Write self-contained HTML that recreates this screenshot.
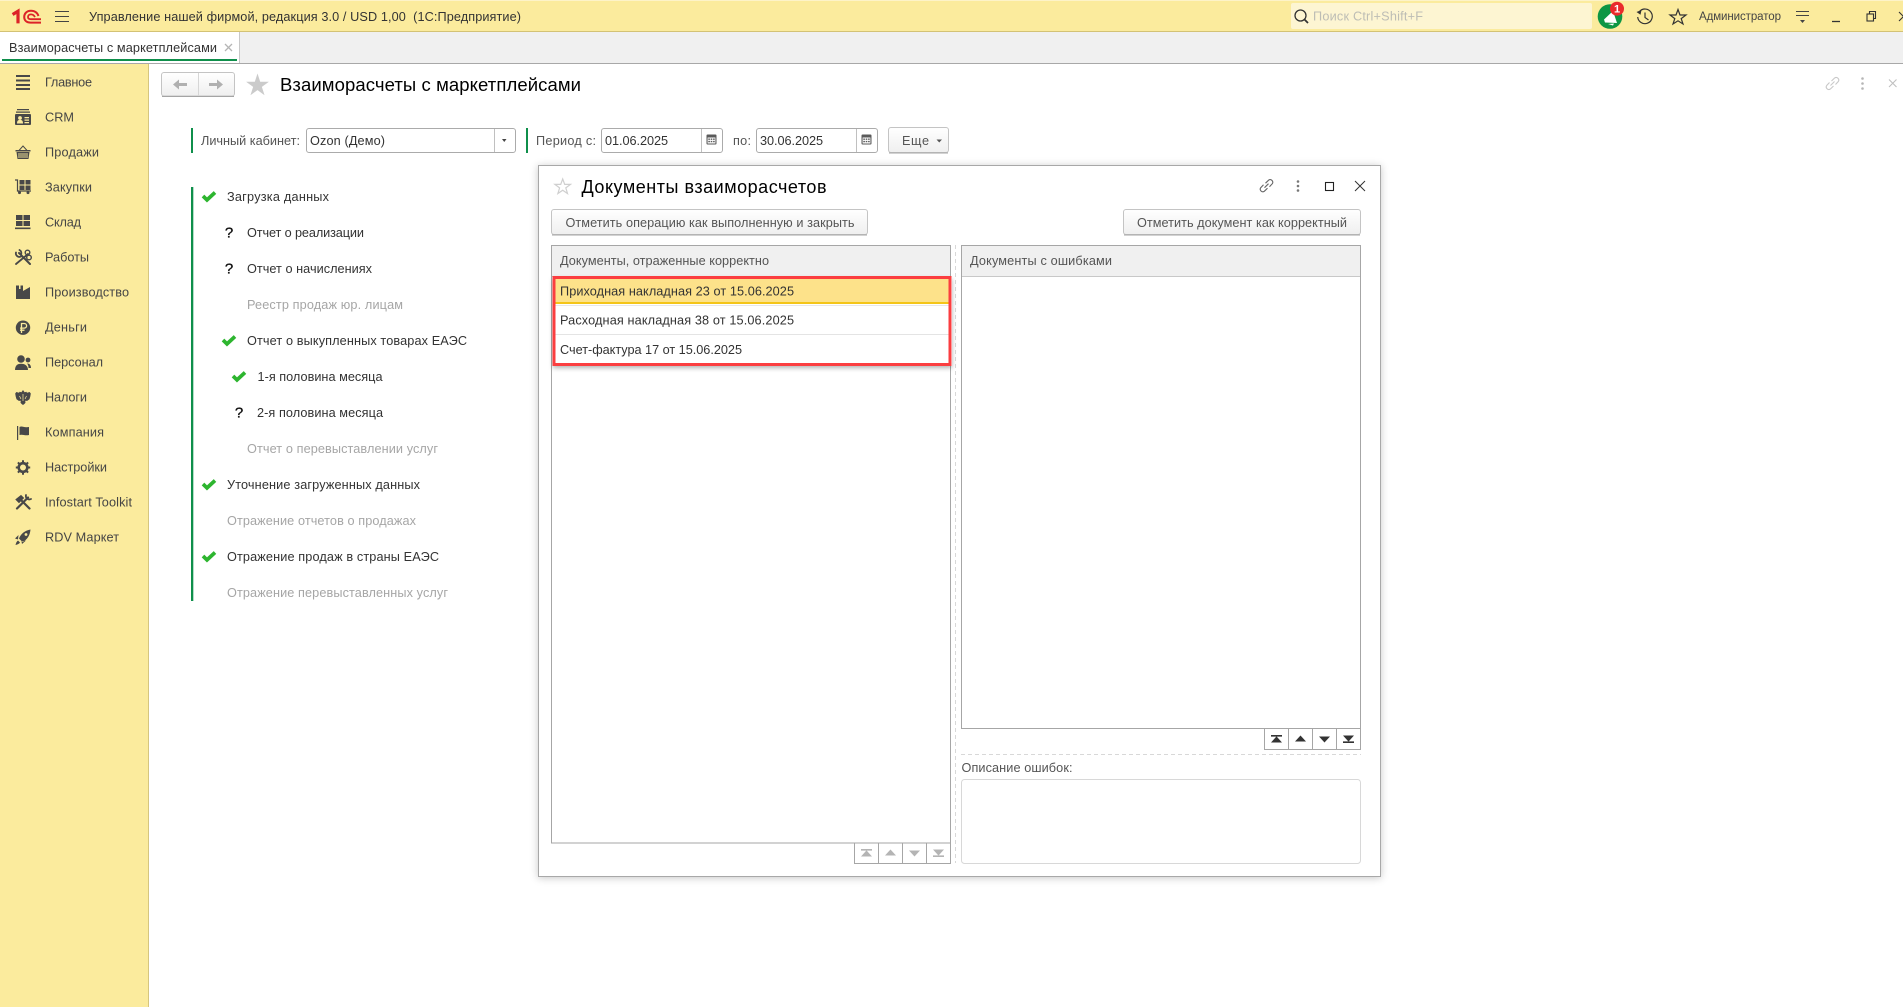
<!DOCTYPE html>
<html lang="ru"><head><meta charset="utf-8"><title>Взаиморасчеты с маркетплейсами</title>
<style>
html,body{margin:0;padding:0;background:#fff;width:1903px;height:1007px;overflow:hidden}
svg{display:block}
text{font-family:"Liberation Sans",Arial,sans-serif;font-size:12.7px;white-space:pre}
.n{fill:#454545}.d{fill:#333}.g{fill:#a6a6a6}.h{fill:#555}
</style></head><body>
<svg xmlns="http://www.w3.org/2000/svg" width="1903" height="1007" viewBox="0 0 1903 1007">
<defs>
<linearGradient id="btn" x1="0" y1="0" x2="0" y2="1"><stop offset="0" stop-color="#fff"/><stop offset="1" stop-color="#efefef"/></linearGradient>
<filter id="sh" x="-5%" y="-5%" width="110%" height="110%"><feDropShadow dx="0" dy="1" stdDeviation="4" flood-color="#000" flood-opacity=".22"/></filter>
<filter id="sh2" x="-5%" y="-10%" width="110%" height="120%"><feDropShadow dx="0" dy="2" stdDeviation="2.5" flood-color="#000" flood-opacity=".3"/></filter>
<polygon id="st" points="0,-1 .225,-.309 .951,-.309 .363,.118 .588,.809 0,.382 -.588,.809 -.363,.118 -.951,-.309 -.225,-.309"/>
<path id="ck" d="M-6 -.5 L-2 3.4 L6 -4" fill="none" stroke="#2db52f" stroke-width="3.7"/>
<g id="cal"><rect x="-5" y="-5" width="10" height="10" rx="1" fill="#5a5a5a"/><rect x="-3.9" y="-2" width="7.8" height="6" fill="#fff"/><path d="M-3.2 -1 h1.6v1.4h-1.6zM-.8 -1 h1.6v1.4h-1.6zM1.6 -1 h1.6v1.4h-1.6zM-3.2 1.4 h1.6v1.4h-1.6zM-.8 1.4 h1.6v1.4h-1.6zM1.6 1.4 h1.6v1.4h-1.6z" fill="#5a5a5a"/></g>
<path id="tb1" d="M-5.5 -4h11v1.6h-11zM0 -2.6 L5.5 3.5 H-5.5z"/>
<path id="tb2" d="M0 -3.5 L5.5 2.5 H-5.5z"/>
<path id="tb3" d="M0 3.5 L5.5 -2.5 H-5.5z"/>
<path id="tb4" d="M-5.5 2.4h11v1.6h-11zM0 2.6 L5.5 -3.5 H-5.5z"/>
<g id="lnk" fill="none" stroke-width="1.1"><path d="M-1 -2.5 L2.2 -5.6 a2.6 2.6 0 0 1 3.6 3.6 L3 1"/><path d="M1 2.5 L-2.2 5.6 a2.6 2.6 0 0 1 -3.6 -3.6 L-3 -1"/><path d="M-2 2 L2 -2"/></g>
</defs>

<!-- top bar -->
<rect width="1903" height="31" fill="#fbeb9d"/>
<rect width="1903" height="1" fill="#fdf3c8"/>
<rect y="31" width="1903" height="1" fill="#d3c275"/>
<!-- logo -->
<g fill="none" stroke="#dc2328">
<path d="M12.6 14.5 L18 11.2 V23.4" stroke-width="3.2"/>
<path d="M38.5 16 C37 12 34 10.8 31 10.8 C26.6 10.8 24.2 13.6 24.2 17 C24.2 20.8 27 22.6 30.6 22.6 H41" stroke-width="2"/>
<path d="M35 17 C33.8 15 32.6 14.4 31 14.4 C29 14.4 28 15.6 28 17 C28 18.6 29.4 19.2 31 19.2 H41" stroke-width="1.8"/>
</g>
<!-- hamburger -->
<path d="M55 11.5h14M55 16.5h14M55 21.5h14" stroke="#444" stroke-width="1.1"/>
<text x="89" y="21" class="d" textLength="432" fill="#444">Управление нашей фирмой, редакция 3.0 / USD 1,00  (1С:Предприятие)</text>
<!-- search -->
<rect x="1291" y="3" width="301" height="26" rx="2" fill="#fdf5d2"/>
<circle cx="1300.5" cy="15.5" r="5.5" fill="none" stroke="#333" stroke-width="1.3"/>
<path d="M1304.5 19.5 L1308 23" stroke="#333" stroke-width="1.8"/>
<text x="1313" y="20.5" fill="#bdbdb5" textLength="110">Поиск Ctrl+Shift+F</text>
<!-- bell -->
<circle cx="1610" cy="16.5" r="12.3" fill="#0d9644"/>
<path d="M1604 19.5 L1613 11 L1617 23 L1605 22.5 Z M1608 24 L1613 25.5 L1614 23.5 Z" fill="#fff"/>
<circle cx="1617" cy="8.7" r="7" fill="#ea2b2b"/>
<text x="1617" y="12.7" fill="#fff" text-anchor="middle" font-weight="bold" style="font-size:11px">1</text>
<!-- history -->
<g fill="none" stroke="#333" stroke-width="1.2"><path d="M1639.5 11.5 A7.3 7.3 0 1 1 1637.7 17"/><path d="M1645 12.500 V17.500 L1648.500 20"/></g>
<path d="M1636.5 12 L1641.5 10 L1640.5 14.800Z" fill="#333"/>
<polygon points="1678,9.500 1680,15 1686,15 1681.200,18.600 1683,24 1678,20.800 1673,24 1674.800,18.600 1670,15 1676,15" fill="none" stroke="#333" stroke-width="1.200"/>
<text x="1699" y="20" fill="#444" textLength="82" style="font-size:11.500px">Администратор</text>
<path d="M1796 11.500h13M1796 15.500h13" stroke="#444" stroke-width="1.100"/><path d="M1800 20h5l-2.500 3z" fill="#444"/>
<path d="M1832 21.500h8" stroke="#333" stroke-width="1.300"/>
<rect x="1867" y="14" width="6.500" height="7" fill="none" stroke="#333" stroke-width="1.100"/><path d="M1869.500 13.500V11.500h6v7h-2" fill="none" stroke="#333" stroke-width="1.100"/>
<path d="M1899 12 L1908 21M1908 12L1899 21" stroke="#333" stroke-width="1.100"/>

<!-- tab bar -->
<rect y="32" width="1903" height="31" fill="#f0f0f0"/>
<rect y="63" width="1903" height="1" fill="#a8a8a8"/>
<rect y="32" width="239" height="31" fill="#fff"/>
<rect x="239" y="32" width="1" height="31" fill="#c8c8c8"/>
<rect x="2" y="59" width="235" height="2" fill="#0f8f4b"/>
<text x="9" y="52" class="d" textLength="208">Взаиморасчеты с маркетплейсами</text>
<path d="M225 44 L232 51M232 44 L225 51" stroke="#b5b5b5" stroke-width="1.300"/>

<!-- sidebar -->
<rect y="64" width="148" height="943" fill="#fbeb9d"/>
<rect x="148" y="64" width="1" height="943" fill="#d6c67e"/>
<g class="n">
<text x="45" y="86.500" textLength="47">Главное</text>
<text x="45" y="121.500" textLength="29">CRM</text>
<text x="45" y="156.500" textLength="54">Продажи</text>
<text x="45" y="191.500" textLength="47">Закупки</text>
<text x="45" y="226.500" textLength="36">Склад</text>
<text x="45" y="261.500" textLength="44">Работы</text>
<text x="45" y="296.500" textLength="84">Производство</text>
<text x="45" y="331.500" textLength="42">Деньги</text>
<text x="45" y="366.500" textLength="58">Персонал</text>
<text x="45" y="401.500" textLength="42">Налоги</text>
<text x="45" y="436.500" textLength="59">Компания</text>
<text x="45" y="471.500" textLength="62">Настройки</text>
<text x="45" y="506.500" textLength="87">Infostart Toolkit</text>
<text x="45" y="541.500" textLength="74">RDV Маркет</text>
</g>
<g fill="#484848" stroke="none">
<!-- главное -->
<path d="M16 75h14v2h-14zM16 79.500h14v2h-14zM16 84h14v2h-14zM16 88h14v2h-14z"/>
<!-- crm -->
<path d="M17 109h12v1.200h-12zM16 111.500h14v1.200h-14z"/>
<rect x="15" y="114" width="16" height="11" rx="1"/>
<circle cx="20" cy="118" r="1.900" fill="#fbeb9d"/><path d="M17 123.500c0-3 1.400-3.600 3-3.600s3 .6 3 3.600z" fill="#fbeb9d"/><path d="M24.500 117h4.500v1.200h-4.500zM24.500 119.500h4.500v1.200h-4.500zM24.500 122h4.500v1.200h-4.500z" fill="#fbeb9d"/>
<!-- basket -->
<path d="M15.500 150h15v1.500h-15zM16.500 152h13l-1 7h-11z"/>
<path d="M18.500 151 L23 146 L27.500 151" fill="none" stroke="#484848" stroke-width="1"/>
<path d="M19 153v5M21 153v5M23 153v5M25 153v5M27 153v5" stroke="#fbeb9d" stroke-width=".9"/>
<!-- cart -->
<path d="M19.500 180h5v4.500h-5zM25.500 180h5v4.500h-5zM19.500 185.500h5v4.500h-5zM25.500 185.500h5v4.500h-5z"/>
<path d="M15 180h2.500v11H31" fill="none" stroke="#484848" stroke-width="1.200"/>
<circle cx="19.500" cy="192.600" r="1.500"/><circle cx="28" cy="192.600" r="1.500"/>
<!-- sklad -->
<path d="M16 215h6.500v5h-6.500zM23.500 215h6.500v5h-6.500zM16 221h6.500v5h-6.500zM23.500 221h6.500v5h-6.500zM15 227.500h15.500v1.600h-15.500z"/>
<!-- raboty -->
<g fill="none" stroke="#484848" stroke-linecap="round"><path d="M19 253 L30 264" stroke-width="2"/><path d="M16 252.500 a3.500 3.500 0 0 0 5 4 M19.500 250 a3.500 3.500 0 0 1 1.500 4.500" stroke-width="1.800"/><path d="M28 254 L16 264" stroke-width="1.800"/><circle cx="27.500" cy="252.500" r="2.300" stroke-width="1.400"/><circle cx="29" cy="257.500" r="2.300" stroke-width="1.400"/></g>
<!-- factory -->
<path d="M16 299 V285.500 H19 V289 H20.500 V285.500 H23 V291 L30 287 V299Z"/>
<!-- money -->
<circle cx="23" cy="327.700" r="7.200"/>
<path d="M21.500 333 V323.500 H24.300 a2.200 2.200 0 0 1 0 4.600 H20 M20 330.200 H24.500" fill="none" stroke="#fbeb9d" stroke-width="1.300"/>
<!-- person -->
<circle cx="21" cy="359" r="3.800"/><path d="M15 370 c0-5 3-6.300 6-6.300 s7 1.300 7 6.300z"/><circle cx="28" cy="360" r="2.400"/><path d="M27 363.500c3 0 4 2 4 4.500h-2.500c0-2-.5-3.500-1.500-4.500z"/>
<!-- eagle -->
<path d="M23 390 l1.600 2.200 1.800-.4 .6 1 2.600-.8 1.200 1.500 -.5 3 -.8 2.800 -2.300 1.600 -2 -.2 .3 2 -1 1.200 -1.500 1.100 -1.500 -1.100 -1 -1.200 .3 -2 -2 .2 -2.300 -1.600 -.8 -2.800 -.5 -3 1.200 -1.500 2.600 .8 .6 -1 1.800 .4z"/>
<path d="M23 394v7M19.500 396l1.500 3M26.500 396l-1.500 3" stroke="#fbeb9d" stroke-width=".7"/>
<!-- flag -->
<path d="M17 426h1.200v14h-1.200zM19.500 427c2.500-1.500 4.500 1 9.500 0v8c-4 1-6.500-1-9.500 0z"/>
<!-- gear -->
<circle cx="23" cy="467.500" r="4.300" fill="none" stroke="#484848" stroke-width="2.600"/>
<path d="M23 460.300v3M23 471.700v3M15.800 467.500h3M27.200 467.500h3M17.900 462.400l2.100 2.100M26 470.500l2.100 2.100M28.100 462.400l-2.100 2.100M20 470.500l-2.100 2.100" stroke="#484848" stroke-width="2"/>
<!-- infostart -->
<g fill="none" stroke="#484848" stroke-linecap="round"><path d="M17 508.500 L28 497.500" stroke-width="2.200"/><path d="M20 499 L29.500 508.500" stroke-width="2.200"/><path d="M16 499.500 L21 495.500 L23.500 498 L19 502.500Z" fill="#484848" stroke-width="1"/><path d="M31 499a3.500 3.500 0 0 1-5-4" stroke-width="1.800"/></g>
<!-- rocket -->
<path d="M30.500 529.500 C25 530.500 21 533.500 19 538.500 L22.500 542 C27 540 30 535.500 30.500 529.500Z M18.500 535 L15 538.500 L18 539.500Z M26 540.500 L22 544 L21.500 541.500Z M18 540.500 C16.500 541.500 16 543 15.500 545 C17.500 544.500 19 544 20 542.500Z"/>
<circle cx="26" cy="534.500" r="1.400" fill="#fbeb9d"/>
</g>

<!-- header -->
<rect x="161.500" y="72.500" width="73" height="23.500" rx="2.500" fill="url(#btn)" stroke="#c4c4c4"/>
<path d="M162 96.500h72" stroke="#a4a4a4"/>
<path d="M198.500 73v23" stroke="#d6d6d6"/>
<path d="M173 84.500 L179 79.500V83H187v3H179v3.500Z" fill="#b0b0b0"/>
<path d="M223 84.500 L217 79.500V83H209v3H217v3.500Z" fill="#b0b0b0"/>
<use href="#st" transform="translate(257.500 85.500) scale(12)" fill="#cbcbcb"/>
<text x="280" y="91" fill="#000" textLength="301" style="font-size:18.500px">Взаиморасчеты с маркетплейсами</text>
<use href="#lnk" transform="translate(1832.500 83.500)" stroke="#c8c8c8"/>
<circle cx="1862.500" cy="78.500" r="1.300" fill="#b5b5b5"/><circle cx="1862.500" cy="83.500" r="1.300" fill="#b5b5b5"/><circle cx="1862.500" cy="88.500" r="1.300" fill="#b5b5b5"/>
<path d="M1889 79.500 L1896.500 87M1896.500 79.500 L1889 87" stroke="#c0c0c0" stroke-width="1.100"/>

<!-- filter row -->
<rect x="191" y="128" width="2" height="25" fill="#0f8f4b"/>
<text x="201" y="145" class="h" textLength="99">Личный кабинет:</text>
<rect x="306.500" y="128.500" width="209" height="24" rx="2.500" fill="#fff" stroke="#ababab"/>
<path d="M494.500 129v23" stroke="#c0c0c0"/>
<path d="M502 139h4.500l-2.250 3z" fill="#444"/>
<text x="310" y="145" class="d" textLength="75">Ozon (Демо)</text>
<rect x="526" y="128" width="2" height="25" fill="#0f8f4b"/>
<text x="536" y="145" class="h" textLength="60">Период с:</text>
<rect x="601.500" y="128.500" width="121" height="24" rx="2.500" fill="#fff" stroke="#ababab"/>
<path d="M701.500 129v23" stroke="#c0c0c0"/>
<text x="605" y="145" class="d" textLength="63">01.06.2025</text>
<use href="#cal" transform="translate(711.500 139.500)"/>
<text x="733" y="145" class="h" textLength="18">по:</text>
<rect x="756.500" y="128.500" width="121" height="24" rx="2.500" fill="#fff" stroke="#ababab"/>
<path d="M856.500 129v23" stroke="#c0c0c0"/>
<text x="760" y="145" class="d" textLength="63">30.06.2025</text>
<use href="#cal" transform="translate(866.500 139.500)"/>
<rect x="888.500" y="127.500" width="60" height="25" rx="2.500" fill="url(#btn)" stroke="#c4c4c4"/>
<path d="M889 153h59" stroke="#a4a4a4"/>
<text x="902" y="145" class="h" textLength="27">Еще</text>
<path d="M936.500 139.500h5.500l-2.750 3z" fill="#555"/>

<!-- left list -->
<rect x="191" y="187" width="2.300" height="414" fill="#0f8f4b"/>
<use href="#ck" transform="translate(209 196.500)"/>
<text x="227" y="201" class="d" textLength="102">Загрузка данных</text>
<text x="229" y="237.500" fill="#111" stroke="#111" stroke-width=".3" text-anchor="middle" style="font-size:15px">?</text>
<text x="247" y="237" class="d" textLength="117">Отчет о реализации</text>
<text x="229" y="273.500" fill="#111" stroke="#111" stroke-width=".3" text-anchor="middle" style="font-size:15px">?</text>
<text x="247" y="273" class="d" textLength="125">Отчет о начислениях</text>
<text x="247" y="309" class="g" textLength="156">Реестр продаж юр. лицам</text>
<use href="#ck" transform="translate(229 340.500)"/>
<text x="247" y="345" class="d" textLength="220">Отчет о выкупленных товарах ЕАЭС</text>
<use href="#ck" transform="translate(239 376.500)"/>
<text x="257.500" y="381" class="d" textLength="125">1-я половина месяца</text>
<text x="239" y="417.500" fill="#111" stroke="#111" stroke-width=".3" text-anchor="middle" style="font-size:15px">?</text>
<text x="257" y="417" class="d" textLength="126">2-я половина месяца</text>
<text x="247" y="453" class="g" textLength="191">Отчет о перевыставлении услуг</text>
<use href="#ck" transform="translate(209 484.500)"/>
<text x="227" y="489" class="d" textLength="193">Уточнение загруженных данных</text>
<text x="227" y="525" class="g" textLength="189">Отражение отчетов о продажах</text>
<use href="#ck" transform="translate(209 556.500)"/>
<text x="227" y="561" class="d" textLength="212">Отражение продаж в страны ЕАЭС</text>
<text x="227" y="597" class="g" textLength="221">Отражение перевыставленных услуг</text>

<!-- dialog -->
<rect x="538.500" y="165.500" width="842" height="711" fill="#fff" stroke="#a8a8a8" filter="url(#sh)"/>
<polygon points="562.700,179 564.700,184.400 570.500,184.400 565.800,187.900 567.500,193.500 562.700,190.200 557.900,193.500 559.600,187.900 554.900,184.400 560.700,184.400" fill="none" stroke="#cfcfcf" stroke-width="1.200"/>
<text x="581.500" y="193" fill="#000" textLength="245" style="font-size:18px">Документы взаиморасчетов</text>
<use href="#lnk" transform="translate(1266.500 185.700)" stroke="#666"/>
<circle cx="1298" cy="181.500" r="1.300" fill="#777"/><circle cx="1298" cy="186" r="1.300" fill="#777"/><circle cx="1298" cy="190.500" r="1.300" fill="#777"/>
<rect x="1325.500" y="182.500" width="8" height="8" fill="none" stroke="#222" stroke-width="1.100"/>
<path d="M1355 181 L1365 191M1365 181 L1355 191" stroke="#333" stroke-width="1"/>

<rect x="551.500" y="209.500" width="316" height="25" rx="2.500" fill="url(#btn)" stroke="#c4c4c4"/>
<path d="M552 235h315" stroke="#a4a4a4"/>
<text x="565.500" y="227" class="h" textLength="289">Отметить операцию как выполненную и закрыть</text>
<rect x="1123.500" y="209.500" width="237" height="25" rx="2.500" fill="url(#btn)" stroke="#c4c4c4"/>
<path d="M1124 235h236" stroke="#a4a4a4"/>
<text x="1137" y="227" class="h" textLength="210">Отметить документ как корректный</text>

<!-- left table -->
<rect x="551.500" y="245.500" width="399" height="597.500" fill="#fff" stroke="#a6a6a6"/>
<rect x="552" y="246" width="398" height="30" fill="#f0f0f0"/>
<rect x="552" y="276" width="398" height="1" fill="#c8c8c8"/>
<text x="560" y="265" class="h" textLength="209">Документы, отраженные корректно</text>
<!-- toolbar left -->
<path d="M854.500 843v20.500h96V843M878.500 843v20.500M902.500 843v20.500M926.500 843v20.500" fill="none" stroke="#a6a6a6"/>
<g fill="#b4b4b4"><use href="#tb1" transform="translate(866.500 853)"/><use href="#tb2" transform="translate(890.500 853)"/><use href="#tb3" transform="translate(914.500 853)"/><use href="#tb4" transform="translate(938.500 853)"/></g>

<!-- vertical splitter -->
<path d="M955.500 245v618" stroke="#d8d8d8" stroke-dasharray="4 3"/>

<!-- red rows -->
<rect x="553" y="277" width="399" height="89" fill="#fff" filter="url(#sh2)"/>
<rect x="554" y="278" width="396" height="26" fill="#fde28a"/>
<rect x="554" y="302" width="396" height="2" fill="#f4c518"/>
<rect x="554" y="334" width="396" height="1" fill="#e4e4e4"/>
<rect x="554" y="305" width="396" height="1" fill="#e8e8e8"/>
<rect x="554" y="277.500" width="396" height="87" fill="none" stroke="#fb3e40" stroke-width="3"/>
<text x="560" y="295.500" class="d" textLength="234">Приходная накладная 23 от 15.06.2025</text>
<text x="560" y="324.500" class="d" textLength="234">Расходная накладная 38 от 15.06.2025</text>
<text x="560" y="354" class="d" textLength="182">Счет-фактура 17 от 15.06.2025</text>

<!-- right table -->
<rect x="961.500" y="245.500" width="399" height="483" fill="#fff" stroke="#a6a6a6"/>
<rect x="962" y="246" width="398" height="30" fill="#f0f0f0"/>
<rect x="962" y="276" width="398" height="1" fill="#c8c8c8"/>
<text x="970" y="265" class="h" textLength="142">Документы с ошибками</text>
<path d="M1264.500 729v20.500h96V729M1288.500 729v20.500M1312.500 729v20.500M1336.500 729v20.500" fill="none" stroke="#a6a6a6"/>
<g fill="#333"><use href="#tb1" transform="translate(1276.500 739)"/><use href="#tb2" transform="translate(1300.500 739)"/><use href="#tb3" transform="translate(1324.500 739)"/><use href="#tb4" transform="translate(1348.500 739)"/></g>
<path d="M961 754.500h400" stroke="#d8d8d8" stroke-dasharray="4 3"/>
<text x="961.500" y="772" class="h" textLength="111">Описание ошибок:</text>
<rect x="961.500" y="779.500" width="399" height="84" rx="3" fill="#fff" stroke="#d8d8d8"/>
</svg>
</body></html>
